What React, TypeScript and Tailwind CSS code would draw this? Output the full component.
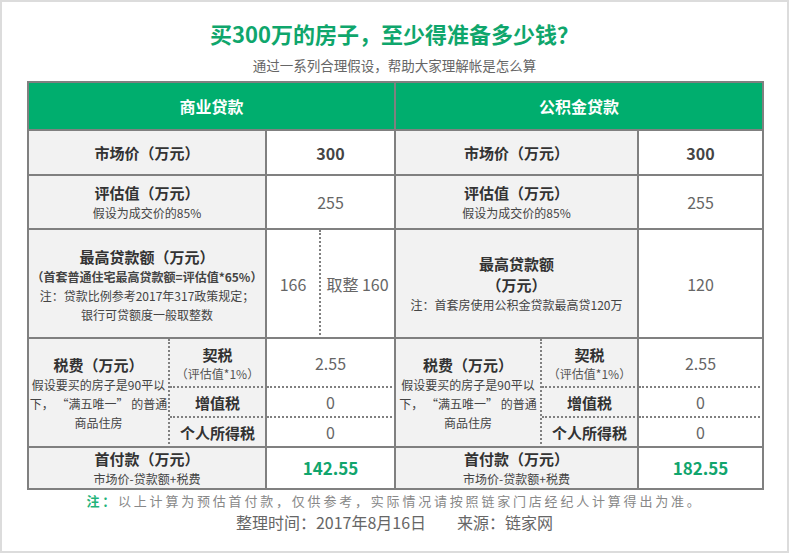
// Down payment comparison sheet
const FONT = "font-['Noto_Sans_CJK_SC',sans-serif]";

interface CellProps {
    className?: string;
    children?: React.ReactNode;
}

// Generic grid cell with right + bottom borders
const Cell = ({ className = "", children }: CellProps) => (
    <div className={`flex flex-col items-center justify-center text-center border-r-2 border-b-2 border-[#808080] ${className}`}>
        {children}
    </div>
);

const Label = ({ className = "", children }: CellProps) => (
    <Cell className={`bg-[#f2f2f2] text-[#333] ${className}`}>{children}</Cell>
);

const Title = ({ children }: { children: React.ReactNode }) => (
    <p className="text-[15px] font-bold leading-[21px] text-[#333]">{children}</p>
);

const Sub = ({ children, bold = false }: { children: React.ReactNode; bold?: boolean }) => (
    <p className={`text-[12px] leading-[19px] text-[#444] whitespace-nowrap ${bold ? "font-bold" : ""}`}>{children}</p>
);

// value cell, tone picks text style
const Value = ({ className = "", children, tone = "plain" }: CellProps & { tone?: "plain" | "strong" | "green" }) => {
    const toneClass =
        tone === "green" ? "text-[17px] font-bold text-[#11a56d]" :
        tone === "strong" ? "text-[16px] font-bold text-[#444]" :
        "text-[16px] text-[#666]";
    return <Cell className={`bg-white ${toneClass} ${className}`}>{children}</Cell>;
};

// Tax block label
const TaxLabel = () => (
    <Label className="row-span-3 border-r [border-right-style:dotted]">
        <Title>税费（万元）</Title>
        <p className="text-[12px] leading-[19px] text-[#444] whitespace-nowrap">
            假设要买的房子是90平以<br />下， “满五唯一” 的普通<br />商品住房
        </p>
    </Label>
);

const DeedTax = () => (
    <Label className="border-b [border-bottom-style:dotted]">
        <Title>契税</Title>
        <p className="text-[12px] leading-[17px] text-[#555]">（评估值*1%）</p>
    </Label>
);

export default function App() {
    return (
        <div className={`w-[789px] h-[553px] border-2 border-[#dcdcdc] bg-white flex flex-col items-center ${FONT}`}>
            <h1 className="mt-[16px] text-[22px] leading-[30px] font-bold text-[#0fa66c]">
                买300万的房子，至少得准备多少钱？
            </h1>
            <p className="mt-[7px] text-[13.5px] leading-[20px] text-[#666]">
                通过一系列合理假设，帮助大家理解帐是怎么算
            </p>

            {/* Table */}
            <div className="self-start ml-[25px] mt-[6px] w-[737px] grid grid-cols-[141px_97px_54px_75px_146px_97px_125px] grid-rows-[48px_45px_54px_109px_49px_30px_30px_42px] border-l-2 border-t-2 border-[#808080]">
                {/* Header */}
                <Cell className="col-span-4 bg-[#00ae6e] text-white text-[16px] font-bold">商业贷款</Cell>
                <Cell className="col-span-3 bg-[#00ae6e] text-white text-[16px] font-bold">公积金贷款</Cell>

                {/* Market price */}
                <Label className="col-span-2"><Title>市场价（万元）</Title></Label>
                <Value className="col-span-2" tone="strong">300</Value>
                <Label className="col-span-2"><Title>市场价（万元）</Title></Label>
                <Value tone="strong">300</Value>

                {/* Assessed value */}
                <Label className="col-span-2">
                    <Title>评估值（万元）</Title>
                    <Sub>假设为成交价的85%</Sub>
                </Label>
                <Value className="col-span-2">255</Value>
                <Label className="col-span-2">
                    <Title>评估值（万元）</Title>
                    <Sub>假设为成交价的85%</Sub>
                </Label>
                <Value>255</Value>

                {/* Max loan */}
                <Label className="col-span-2 pt-[2px]">
                    <Title>最高贷款额（万元）</Title>
                    <Sub bold>（首套普通住宅最高贷款额=评估值*65%）</Sub>
                    <Sub>注：贷款比例参考2017年317政策规定；</Sub>
                    <Sub>银行可贷额度一般取整数</Sub>
                </Label>
                <Value className="border-r [border-right-style:dotted]">166</Value>
                <Value>取整 160</Value>
                <Label className="col-span-2">
                    <Title>最高贷款额</Title>
                    <Title>（万元）</Title>
                    <Sub>注：首套房使用公积金贷款最高贷120万</Sub>
                </Label>
                <Value>120</Value>

                {/* Taxes */}
                <TaxLabel />
                <DeedTax />
                <Value className="col-span-2 border-b [border-bottom-style:dotted]">2.55</Value>
                <TaxLabel />
                <DeedTax />
                <Value className="border-b [border-bottom-style:dotted]">2.55</Value>

                <Label className="border-b [border-bottom-style:dotted]"><Title>增值税</Title></Label>
                <Value className="col-span-2 border-b [border-bottom-style:dotted]">0</Value>
                <Label className="border-b [border-bottom-style:dotted]"><Title>增值税</Title></Label>
                <Value className="border-b [border-bottom-style:dotted]">0</Value>

                <Label><Title>个人所得税</Title></Label>
                <Value className="col-span-2">0</Value>
                <Label><Title>个人所得税</Title></Label>
                <Value>0</Value>

                {/* Down payment */}
                <Label className="col-span-2">
                    <Title>首付款（万元）</Title>
                    <Sub>市场价-贷款额+税费</Sub>
                </Label>
                <Value className="col-span-2" tone="green">142.55</Value>
                <Label className="col-span-2">
                    <Title>首付款（万元）</Title>
                    <Sub>市场价-贷款额+税费</Sub>
                </Label>
                <Value tone="green">182.55</Value>
            </div>

            {/* Footer */}
            <p className="mt-[1px] text-[13px] leading-[20px] tracking-[2.8px] text-[#888] whitespace-nowrap">
                <span className="font-bold text-[#1fb37a]">注：</span>
                以上计算为预估首付款，仅供参考，实际情况请按照链家门店经纪人计算得出为准。
            </p>
            <p className="mt-[1px] text-[16px] leading-[20px] text-[#666] whitespace-nowrap">
                整理时间：2017年8月16日<span className="inline-block w-[31px]" />来源：链家网
            </p>
        </div>
    );
}
